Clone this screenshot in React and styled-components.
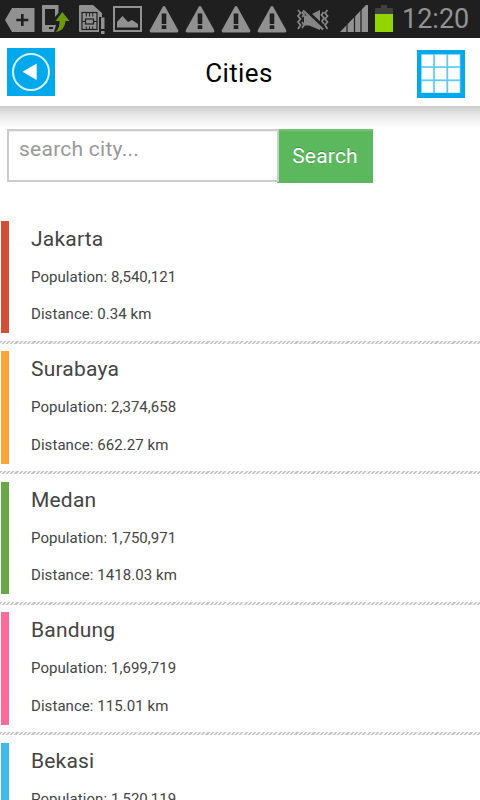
import * as React from 'react'
import styled, { createGlobalStyle } from 'styled-components'

const GlobalStyle = createGlobalStyle`
  * {
    box-sizing: border-box;
  }
  body {
    margin: 0;
    background: #fff;
    font-family: Roboto, "Liberation Sans", sans-serif;
    overflow: hidden;
  }
`
const Wrapper = styled.div`
  width: 480px;
  height: 800px;
  overflow: hidden;
  background: #fff;
`
const StatusBar = styled.div`
  height: 38px;
  background: #1f1f1f;
  display: flex;
`
const StatusIcons = styled.svg`
  display: block;
  width: 400px;
  height: 38px;
  flex-shrink: 0;
`
const Clock = styled.div`
  padding-left: 2px;
  font-size: 27px;
  line-height: 38px;
  color: #929292;
`
const Header = styled.div`
  height: 68px;
  padding: 10px 15px 0 7px;
  display: flex;
  justify-content: space-between;
`
const HeaderTitle = styled.div`
  padding-left: 6px;
  font-size: 26px;
  line-height: 50px;
  letter-spacing: 0.4px;
  color: #000;
`
const HeaderButton = styled.div`
  width: 48px;
  height: 48px;
  margin-top: ${props => props.offset || 0}px;
  background: #00a8ec;
  svg {
    display: block;
  }
`
const HeaderShadow = styled.div`
  height: 23px;
  background: linear-gradient(#cacaca, #d8d8d8 15%, #ebebeb 45%, #f9f9f9 80%, #fff);
`
const SearchForm = styled.div`
  height: 91.9px;
  padding-left: 7px;
  display: flex;
  align-items: flex-start;
`
const SearchInput = styled.input`
  width: 272px;
  height: 53px;
  margin: 0 -2px 0 0;
  padding: 0 10px 13px;
  border: 2px solid #ccc;
  border-radius: 0;
  box-shadow: inset 0 1px 1px rgba(0, 0, 0, 0.07);
  background: #fff;
  outline: none;
  font-family: inherit;
  font-size: 21px;
  letter-spacing: 0.25px;
  z-index: 1;
  &::placeholder {
    color: #999;
    opacity: 1;
  }
`
const SearchButton = styled.button`
  width: 96px;
  height: 54px;
  padding: 0;
  border: 0;
  background: #5cb85c;
  box-shadow: inset 0 2px 0 #74c274;
  color: #fff;
  font-family: inherit;
  font-size: 21px;
  letter-spacing: 0.2px;
  text-shadow: 0 -1px 0 rgba(0, 0, 0, 0.25);
`
const CityRow = styled.div`
  height: 130.5px;
  padding-left: 1px;
`
const CityBody = styled.div`
  height: 112.5px;
  padding-left: 22px;
  border-left: 8px solid ${props => props.color};
  color: #444;
`
const CityName = styled.div`
  margin-bottom: 2px;
  font-size: 21px;
  line-height: 36px;
  letter-spacing: 0.2px;
`
const CityInfo = styled.div`
  font-size: 15px;
  line-height: 37.5px;
  letter-spacing: 0.06px;
`
const Divider = styled.div`
  height: 3px;
  margin: 7.5px 0 0 -1px;
  background: repeating-linear-gradient(135deg, #c6c6c6 0, #c6c6c6 1.5px, #f4f4f4 1.5px, #f4f4f4 3px);
`

const cities = [
  { name: 'Jakarta', population: '8,540,121', distance: '0.34', color: '#d14f36' },
  { name: 'Surabaya', population: '2,374,658', distance: '662.27', color: '#ffa436' },
  { name: 'Medan', population: '1,750,971', distance: '1418.03', color: '#67a844' },
  { name: 'Bandung', population: '1,699,719', distance: '115.01', color: '#ff6a9b' },
  { name: 'Bekasi', population: '1,520,119', color: '#3dbcec' },
]

const warnings = [150, 186, 222, 258]
const gridCells = [4.7, 17.9, 31.2]

const StatusBarIcons = () => (
  <StatusIcons viewBox="0 0 400 38" fill="#919191">
    <path d="M5 20L12 8H34.5V32H12Z" />
    <path d="M22.3 14V26M16.3 20H28.3" stroke="#1f1f1f" strokeWidth="2.6" />

    <path d="M43 5H58.5V13L55 17V9H45V25H56L54 32H43Q42 32 42 31V6Q42 5 43 5Z" />
    <path d="M49 28H53" stroke="#1f1f1f" strokeWidth="2" />
    <path d="M62.3 12L69.5 21H65.5Q65 30.5 55.5 32Q60 28 59.5 21H55.5Z" fill="#6d9a0b" />

    <path d="M80 5H93L102 13V17H99V32H80Q79 32 79 31V6Q79 5 80 5Z" />
    <rect x="82" y="12.5" width="15" height="17" fill="#919191" stroke="#1f1f1f" strokeWidth="1.2" />
    <rect x="85.5" y="19" width="8" height="5" fill="none" stroke="#1f1f1f" strokeWidth="1.2" />
    <path d="M86.3 12V16.5M89.5 12V16.5M92.7 12V16.5M86.3 26.5V30M89.5 26.5V30M92.7 26.5V30M82 21.5H85M94 21.5H97" stroke="#1f1f1f" strokeWidth="1" />
    <path d="M101 17.5H104.5V29H101ZM101 31H104.5V34H101Z" />

    <rect x="114" y="7" width="27" height="24" fill="none" stroke="#919191" strokeWidth="2" />
    <path d="M117 27.5V22L122.5 16L128 22L132 20L138 24V27.5Z" />

    {warnings.map(x => (
      <g key={x} transform={`translate(${x} 0)`}>
        <path d="M14 7.5L27 31H1Z" stroke="#919191" strokeWidth="2.8" strokeLinejoin="round" />
        <path d="M11.7 13.5H16.3V24H11.7ZM11.7 25.2H16.3V29H11.7Z" fill="#1f1f1f" />
      </g>
    ))}

    <path d="M304 15.5H309L320 10V30L309 25.5H304Z" fill="#858585" />
    <path d="M304 9L324 28" stroke="#1f1f1f" strokeWidth="4" />
    <path d="M303 10.5L323 29.5" stroke="#858585" strokeWidth="2.4" />
    <path d="M298 10L300.5 13L298 16L300.5 19L298 22L300.5 25L298 29M302 12L304 15L302 17M302 22L304 25L302 28M327.5 10L325 13L327.5 16L325 19L327.5 22L325 25L327.5 29M323.5 12L321.5 15L324 18L322 21L324 24" fill="none" stroke="#858585" strokeWidth="1.8" />

    <path d="M340 32L366 5H368V32Z" />
    <path d="M347 23V32M354.5 15V32M361 8V32" stroke="#1f1f1f" strokeWidth="1.2" />

    <path d="M375 8H381V5H387V8H393V14H375Z" fill="#404040" />
    <path d="M375 14H393V32H375Z" fill="#93d500" />
  </StatusIcons>
)

const App = () => (
  <Wrapper>
    <GlobalStyle />
    <StatusBar>
      <StatusBarIcons />
      <Clock>12:20</Clock>
    </StatusBar>
    <Header>
      <HeaderButton>
        <svg width="48" height="48" viewBox="0 0 48 48">
          <circle cx="24" cy="24" r="18" fill="none" stroke="#d8f2fd" strokeWidth="2" />
          <path d="M15.5 23.7L29.7 15.5V32Z" fill="#fff" />
        </svg>
      </HeaderButton>
      <HeaderTitle>Cities</HeaderTitle>
      <HeaderButton offset={2}>
        <svg width="48" height="48" viewBox="0 0 48 48">
          <rect x="4" y="4" width="39.5" height="39" fill="#5fcaf4" />
          {gridCells.map(y => gridCells.map(x => (
            <rect key={`${x}-${y}`} x={x} y={y} width="11.5" height="11.5" fill="#fff" />
          )))}
        </svg>
      </HeaderButton>
    </Header>
    <HeaderShadow />
    <SearchForm>
      <SearchInput placeholder="search city..." />
      <SearchButton>Search</SearchButton>
    </SearchForm>
    {cities.map(city => (
      <CityRow key={city.name}>
        <CityBody color={city.color}>
          <CityName>{city.name}</CityName>
          <CityInfo>Population: {city.population}</CityInfo>
          {city.distance ? <CityInfo>Distance: {city.distance} km</CityInfo> : null}
        </CityBody>
        <Divider />
      </CityRow>
    ))}
  </Wrapper>
)

export default App
